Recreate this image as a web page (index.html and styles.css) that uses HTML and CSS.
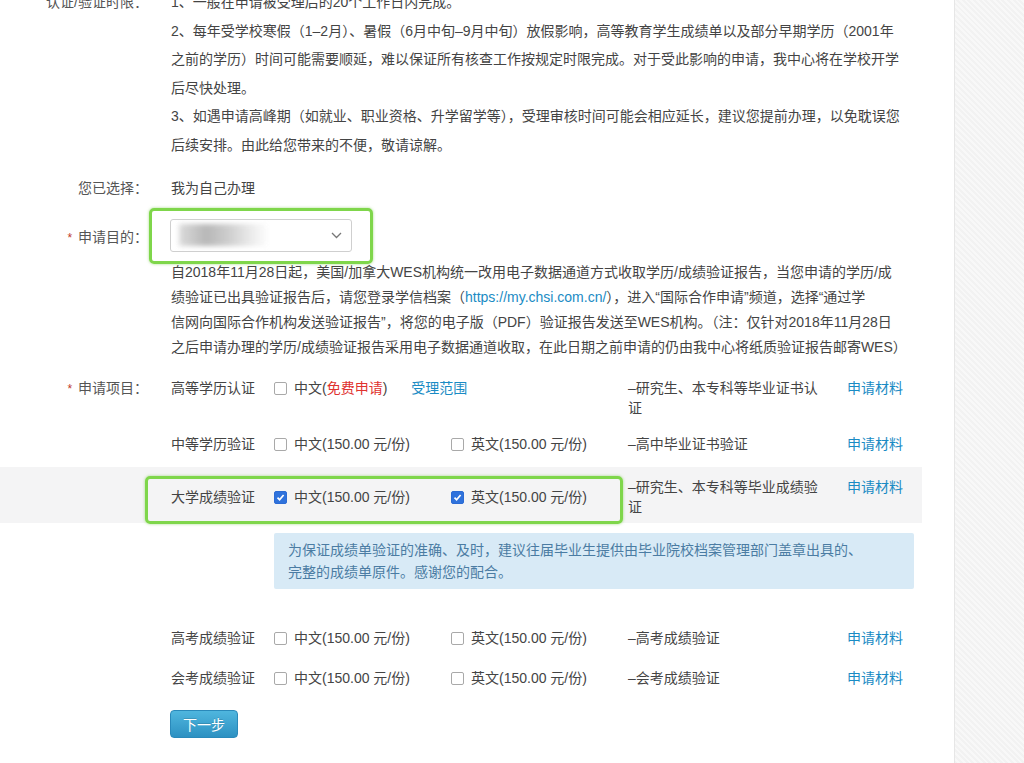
FILE: index.html
```html
<!DOCTYPE html>
<html lang="zh-CN">
<head>
<meta charset="utf-8">
<title>申请项目</title>
<link rel="stylesheet" href="styles.css">
</head>
<body>
<div class="page">
  <main class="main">
    <div class="field limits">
      <div class="label">认证/验证时限：</div>
      <div class="value">1、一般在申请被受理后的20个工作日内完成。<br>2、每年受学校寒假（1–2月）、暑假（6月中旬–9月中旬）放假影响，高等教育学生成绩单以及部分早期学历（2001年<br>之前的学历）时间可能需要顺延，难以保证所有核查工作按规定时限完成。对于受此影响的申请，我中心将在学校开学<br>后尽快处理。<br>3、如遇申请高峰期（如就业、职业资格、升学留学等），受理审核时间可能会相应延长，建议您提前办理，以免耽误您<br>后续安排。由此给您带来的不便，敬请谅解。</div>
    </div>

    <div class="field chosen">
      <div class="label">您已选择：</div>
      <div class="value">我为自己办理</div>
    </div>

    <div class="field purpose">
      <div class="label"><span class="req">*</span> 申请目的：</div>
      <div class="value">
        <div class="select-wrap">
          <div class="select">
            <span class="blur"></span>
            <svg class="chev" width="11" height="7" viewBox="0 0 11 7"><polyline points="1,1 5.5,5.5 10,1" fill="none" stroke="#777" stroke-width="1.3"/></svg>
          </div>
          <span class="mark"></span>
        </div>
      </div>
    </div>

    <div class="field note">
      <div class="label"></div>
      <div class="value">自2018年11月28日起，美国/加拿大WES机构统一改用电子数据通道方式收取学历/成绩验证报告，当您申请的学历/成<br>绩验证已出具验证报告后，请您登录学信档案（<a class="link">https://my.chsi.com.cn/</a>），进入“国际合作申请”频道，选择“通过学<br>信网向国际合作机构发送验证报告”，将您的电子版（PDF）验证报告发送至WES机构。（注：仅针对2018年11月28日<br>之后申请办理的学历/成绩验证报告采用电子数据通道收取，在此日期之前申请的仍由我中心将纸质验证报告邮寄WES）</div>
    </div>

    <div class="items">
      <div class="item r1">
        <div class="label"><span class="req">*</span> 申请项目：</div>
        <div class="name">高等学历认证</div>
        <div class="opt wide"><span class="cb"></span>中文(<span class="red">免费申请</span>)<a class="link scope">受理范围</a></div>
        <div class="desc">–研究生、本专科等毕业证书认<br>证</div>
        <a class="link mat">申请材料</a>
      </div>

      <div class="item r2">
        <div class="label"></div>
        <div class="name">中等学历验证</div>
        <div class="opt"><span class="cb"></span>中文(150.00 元/份)</div>
        <div class="opt"><span class="cb"></span>英文(150.00 元/份)</div>
        <div class="desc">–高中毕业证书验证</div>
        <a class="link mat">申请材料</a>
      </div>

      <div class="item r3">
        <div class="label"></div>
        <div class="name">大学成绩验证</div>
        <div class="opt"><span class="cb on"><svg width="9" height="9" viewBox="0 0 9 9"><polyline points="1.5,4.6 3.6,6.8 7.6,2" fill="none" stroke="#fff" stroke-width="1.7"/></svg></span>中文(150.00 元/份)</div>
        <div class="opt"><span class="cb on"><svg width="9" height="9" viewBox="0 0 9 9"><polyline points="1.5,4.6 3.6,6.8 7.6,2" fill="none" stroke="#fff" stroke-width="1.7"/></svg></span>英文(150.00 元/份)</div>
        <div class="desc">–研究生、本专科等毕业成绩验<br>证</div>
        <a class="link mat">申请材料</a>
        <span class="mark row-mark"></span>
      </div>

      <div class="info">为保证成绩单验证的准确、及时，建议往届毕业生提供由毕业院校档案管理部门盖章出具的、<br>完整的成绩单原件。感谢您的配合。</div>

      <div class="item r4">
        <div class="label"></div>
        <div class="name">高考成绩验证</div>
        <div class="opt"><span class="cb"></span>中文(150.00 元/份)</div>
        <div class="opt"><span class="cb"></span>英文(150.00 元/份)</div>
        <div class="desc">–高考成绩验证</div>
        <a class="link mat">申请材料</a>
      </div>

      <div class="item r5">
        <div class="label"></div>
        <div class="name">会考成绩验证</div>
        <div class="opt"><span class="cb"></span>中文(150.00 元/份)</div>
        <div class="opt"><span class="cb"></span>英文(150.00 元/份)</div>
        <div class="desc">–会考成绩验证</div>
        <a class="link mat">申请材料</a>
      </div>
    </div>

    <button class="next">下一步</button>
  </main>
  <aside class="side"></aside>
</div>
</body>
</html>
```

FILE: styles.css
```css
html, body {
  margin: 0;
  padding: 0;
  background: #fff;
  overflow: hidden;
}

body {
  font-family: "Liberation Sans", "Noto Sans CJK SC", sans-serif;
  font-size: 14px;
  color: #444;
}

.page {
  display: flex;
  width: 1024px;
  height: 763px;
  overflow: hidden;
}

.main {
  flex: 1;
  margin-top: -12px;
}

.side {
  width: 69px;
  border-left: 1px solid #e6e6e6;
  background: repeating-linear-gradient(45deg, #f2f2f2 0 2px, #f8f8f8 2px 4px);
}

/* ---------- top fields ---------- */
.field {
  display: grid;
  grid-template-columns: 171px 1fr;
  white-space: nowrap;
}

.field .label {
  text-align: right;
  padding-right: 23px;
  color: #555;
}

.req {
  color: #c0392b;
  font-size: 12px;
  margin-right: 2px;
}

.limits {
  line-height: 28.5px;
}

.chosen {
  margin-top: 15px;
  line-height: 28.5px;
}

.purpose {
  margin-top: 16px;
  align-items: center;
}

.purpose .label {
  padding-top: 2px;
}

.select-wrap {
  position: relative;
  width: 182px;
  height: 33px;
  margin-left: -1px;
}

.select {
  box-sizing: border-box;
  width: 182px;
  height: 33px;
  border: 1px solid #cfcfcf;
  border-radius: 3px;
  background: #fff;
  display: flex;
  align-items: center;
  justify-content: space-between;
  padding: 0 9px 0 8px;
  overflow: hidden;
}

.blur {
  display: block;
  width: 90px;
  height: 22px;
  background: linear-gradient(90deg, #d8d8d8 0%, #b0b0b0 30%, #c9c9c9 55%, #e9e9e9 80%, #fff 100%);
  filter: blur(2.5px);
  opacity: 0.9;
}

.mark {
  position: absolute;
  box-sizing: border-box;
  border: 3px solid #7fd64b;
  border-radius: 5px;
  box-shadow: 0 0 3px rgba(110, 200, 60, 0.6);
  pointer-events: none;
}

.select-wrap .mark {
  left: -21px;
  top: -11px;
  right: -21px;
  bottom: -12px;
}

.note {
  margin-top: 8.5px;
  line-height: 25px;
}

.link {
  color: #1a8bc4;
  text-decoration: none;
}

.red {
  color: #e0322f;
}

/* ---------- items table ---------- */
.items {
  margin-top: 10px;
  width: 922px;
}

.item {
  position: relative;
  display: grid;
  grid-template-columns: 171px 103px 177px 177px 219px 75px;
  align-items: start;
  line-height: 20px;
  padding: 8px 0;
  white-space: nowrap;
}

.item .label {
  text-align: right;
  padding-right: 23px;
  color: #555;
}

.item .name {
  color: #444;
}

.opt.wide {
  grid-column: span 2;
}

.scope {
  margin-left: 24px;
}

.cb {
  display: inline-block;
  box-sizing: border-box;
  width: 13px;
  height: 13px;
  border: 1px solid #a9a9a9;
  border-radius: 2px;
  background: #fff;
  vertical-align: -2px;
  margin-right: 7px;
  position: relative;
}

.cb.on {
  border-color: #2c6bd4;
  background: #2f72dc;
}

.cb.on svg {
  position: absolute;
  left: 1px;
  top: 1px;
}

.r3 {
  margin-top: 5px;
  padding: 10px 0 6px;
  background: #f4f4f5;
  align-items: center;
}

.r3 .desc,
.r3 .mat {
  align-self: start;
}

.r3 .row-mark {
  left: 145px;
  top: 9px;
  width: 478px;
  height: 48px;
}

.info {
  margin: 10px 0 0 274px;
  width: 640px;
  box-sizing: border-box;
  padding: 6px 14px;
  line-height: 22px;
  background: #d8eaf6;
  color: #4b7ca3;
  border-radius: 2px;
  white-space: nowrap;
}

.r4 {
  margin-top: 29px;
  padding: 10px 0;
}

.r5 {
  padding: 10px 0;
}

/* ---------- button ---------- */
.next {
  display: block;
  margin: 12px 0 0 170px;
  width: 68px;
  height: 28px;
  padding: 0;
  border: 1px solid #2a89ba;
  border-radius: 4px;
  background: linear-gradient(#4fb6de, #2d91c2);
  color: #fff;
  font-family: "Liberation Sans", "Noto Sans CJK SC", sans-serif;
  font-size: 14px;
  text-shadow: 0 -1px 0 rgba(0, 0, 0, 0.15);
}
```
